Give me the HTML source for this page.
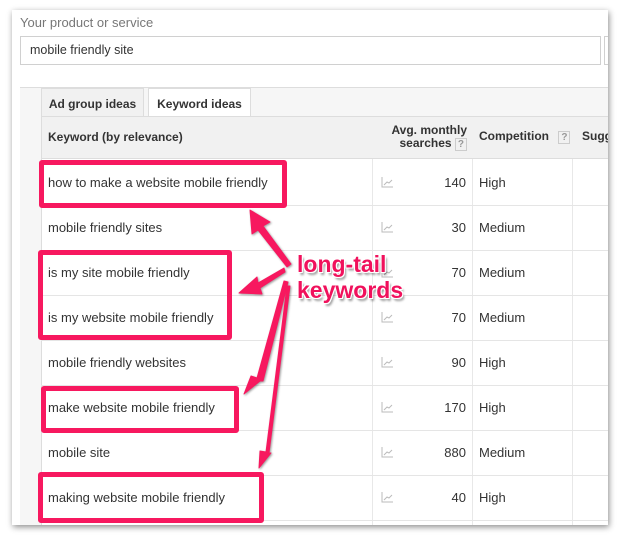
<!DOCTYPE html>
<html><head><style>
body{margin:0;width:622px;height:543px;background:#fff;font-family:"Liberation Sans",Arial,sans-serif;position:relative;overflow:hidden}
.panel{position:absolute;left:12px;top:10px;width:596px;height:515px;background:#fff;box-shadow:1px 2px 6px rgba(0,0,0,.45);overflow:hidden}
.abs{position:absolute}
.row{position:absolute;left:41px;width:567px;height:45px;border-bottom:1px solid #e5e5e5;font-size:13px;color:#333}
.row .k{position:absolute;left:7px;top:15px}
.row .n{position:absolute;right:142px;top:15px;width:60px;text-align:right}
.row .c{position:absolute;left:438px;top:15px}
.row .ic{position:absolute;left:340px;top:16px}
.box{position:absolute;border:5px solid #f7185f;border-radius:3px}
</style></head><body>
<div class="panel">
 <div class="abs" style="left:8px;top:5px;font-size:13px;color:#777">Your product or service</div>
 <div class="abs" style="left:8px;top:26px;width:579px;height:27px;border:1px solid #d0d0d0;font-size:12.5px;color:#333;line-height:27px;text-indent:9px">mobile friendly site</div>
 <div class="abs" style="left:592px;top:26px;width:20px;height:27px;border:1px solid #d0d0d0"></div>
 <div class="abs" style="left:8px;top:77px;width:600px;height:440px;background:#f6f6f6;border-top:1px solid #ddd"></div>
 <div class="abs" style="left:29px;top:78px;width:101px;height:28px;background:#f1f1f1;border:1px solid #ddd;border-bottom:none;font-size:12px;font-weight:bold;color:#333;text-align:center;line-height:30px">Ad group ideas</div>
 <div class="abs" style="left:136px;top:78px;width:101px;height:29px;background:#fff;border:1px solid #ddd;border-bottom:none;font-size:12px;font-weight:bold;color:#333;text-align:center;line-height:30px">Keyword ideas</div>
 <div class="abs" style="left:29px;top:106px;width:580px;height:41px;background:#f1f1f1;border-top:1px solid #ddd;border-left:1px solid #ddd;border-bottom:2px solid #ddd"></div>
 <div class="abs" style="left:36px;top:120px;font-size:12px;font-weight:bold;color:#333">Keyword (by relevance)</div>
 <div class="abs" style="left:372px;top:114px;font-size:12px;font-weight:bold;color:#333;text-align:right;width:83px;line-height:13px">Avg. monthly<br>searches <span style="border:1px solid #ccc;color:#999;font-size:10px;padding:0 2px">?</span></div>
 <div class="abs" style="left:467px;top:119px;font-size:12px;font-weight:bold;color:#333">Competition <span style="border:1px solid #ccc;color:#999;font-size:10px;padding:0 2px;margin-left:6px">?</span></div>
 <div class="abs" style="left:570px;top:119px;font-size:12px;font-weight:bold;color:#333">Sugg</div>
 <div class="abs" style="left:29px;top:149px;width:580px;height:370px;background:#fff;border-left:1px solid #ddd"></div>
 <div class="abs" style="left:360px;top:149px;width:1px;height:370px;background:#e8e8e8"></div>
 <div class="abs" style="left:460px;top:149px;width:1px;height:370px;background:#e8e8e8"></div>
 <div class="abs" style="left:560px;top:149px;width:1px;height:370px;background:#e8e8e8"></div>
</div>
<div class="row" style="top:160px"><span class="k">how to make a website mobile friendly</span><span class="ic"><svg width="12" height="11"><path d="M1 0V10H12M3 8L6 5L8 6L11 3" stroke="#bbb" fill="none"/></svg></span><span class="n">140</span><span class="c">High</span></div>
<div class="row" style="top:205px"><span class="k">mobile friendly sites</span><span class="ic"><svg width="12" height="11"><path d="M1 0V10H12M3 8L6 5L8 6L11 3" stroke="#bbb" fill="none"/></svg></span><span class="n">30</span><span class="c">Medium</span></div>
<div class="row" style="top:250px"><span class="k">is my site mobile friendly</span><span class="ic"><svg width="12" height="11"><path d="M1 0V10H12M3 8L6 5L8 6L11 3" stroke="#bbb" fill="none"/></svg></span><span class="n">70</span><span class="c">Medium</span></div>
<div class="row" style="top:295px"><span class="k">is my website mobile friendly</span><span class="ic"><svg width="12" height="11"><path d="M1 0V10H12M3 8L6 5L8 6L11 3" stroke="#bbb" fill="none"/></svg></span><span class="n">70</span><span class="c">Medium</span></div>
<div class="row" style="top:340px"><span class="k">mobile friendly websites</span><span class="ic"><svg width="12" height="11"><path d="M1 0V10H12M3 8L6 5L8 6L11 3" stroke="#bbb" fill="none"/></svg></span><span class="n">90</span><span class="c">High</span></div>
<div class="row" style="top:385px"><span class="k">make website mobile friendly</span><span class="ic"><svg width="12" height="11"><path d="M1 0V10H12M3 8L6 5L8 6L11 3" stroke="#bbb" fill="none"/></svg></span><span class="n">170</span><span class="c">High</span></div>
<div class="row" style="top:430px"><span class="k">mobile site</span><span class="ic"><svg width="12" height="11"><path d="M1 0V10H12M3 8L6 5L8 6L11 3" stroke="#bbb" fill="none"/></svg></span><span class="n">880</span><span class="c">Medium</span></div>
<div class="row" style="top:475px"><span class="k">making website mobile friendly</span><span class="ic"><svg width="12" height="11"><path d="M1 0V10H12M3 8L6 5L8 6L11 3" stroke="#bbb" fill="none"/></svg></span><span class="n">40</span><span class="c">High</span></div>
<div class="box" style="left:39px;top:160px;width:238px;height:38px"></div>
<div class="box" style="left:38px;top:250px;width:184px;height:80px"></div>
<div class="box" style="left:41px;top:386px;width:188px;height:37px"></div>
<div class="box" style="left:38px;top:472px;width:216px;height:41px"></div>
<svg style="position:absolute;left:0;top:0" width="622" height="543">
 <g fill="#f7185f" stroke="#f7185f" stroke-width="1" stroke-linejoin="round" style="filter:drop-shadow(1px 1px 1px rgba(0,0,0,.4))">
  <polygon points="291,264 263,226 270,222 250,210 252,234 258,230 287,267"/>
  <polygon points="284,268 258,283 257,277 239,293 262,294 260,288 285,272"/>
  <polygon points="284,281 257,378 251,376 244,394 260,381 263,381 288,282"/>
  <polygon points="287,286 266,452 260,451 259,468 271,453 269,453 290,286"/>
 </g>
</svg>
<div style="position:absolute;left:297px;top:251px;font-size:23px;font-weight:bold;color:#f0115c;line-height:26px;text-shadow:-1px -1px 0 #fff,1px -1px 0 #fff,-1px 1px 0 #fff,1px 1px 0 #fff,2px 3px 2px rgba(0,0,0,.4)">long-tail<br>keywords</div>
</body></html>
